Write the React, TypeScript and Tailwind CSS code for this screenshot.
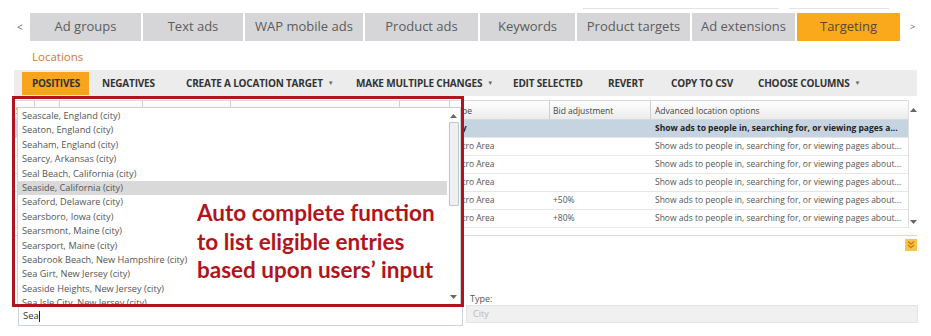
import React from "react";

const tabs = [
	{ label: "Ad groups", w: "w-[111px]" },
	{ label: "Text ads", w: "w-[100px]" },
	{ label: "WAP mobile ads", w: "w-[118px]" },
	{ label: "Product ads", w: "w-[113px]" },
	{ label: "Keywords", w: "w-[95px]" },
	{ label: "Product targets", w: "w-[113px]" },
	{ label: "Ad extensions", w: "w-[103px]" },
	{ label: "Targeting", w: "w-[103px]", active: true },
];

const tools = [
	{ label: "NEGATIVES", w: "w-[97px] pl-[13px]" },
	{ label: "CREATE A LOCATION TARGET", w: "w-[170px]", caret: true },
	{ label: "MAKE MULTIPLE CHANGES", w: "w-[157px]", caret: true },
	{ label: "EDIT SELECTED", w: "w-[95px]" },
	{ label: "REVERT", w: "w-[63px]" },
	{ label: "COPY TO CSV", w: "w-[87px]" },
	{ label: "CHOOSE COLUMNS", w: "w-[150px]", caret: true },
];

const suggestions = [
	"Seascale, England (city)",
	"Seaton, England (city)",
	"Seaham, England (city)",
	"Searcy, Arkansas (city)",
	"Seal Beach, California (city)",
	"Seaside, California (city)",
	"Seaford, Delaware (city)",
	"Searsboro, Iowa (city)",
	"Searsmont, Maine (city)",
	"Searsport, Maine (city)",
	"Seabrook Beach, New Hampshire (city)",
	"Sea Girt, New Jersey (city)",
	"Seaside Heights, New Jersey (city)",
	"Sea Isle City, New Jersey (city)",
];

const rows = [
	{ loc: "Seattle, Washington", type: "City", bid: "", bold: true },
	{ loc: "Seattle-Tacoma", type: "Metro Area", bid: "" },
	{ loc: "Portland", type: "Metro Area", bid: "" },
	{ loc: "Spokane", type: "Metro Area", bid: "" },
	{ loc: "Boise", type: "Metro Area", bid: "+50%" },
	{ loc: "Yakima", type: "Metro Area", bid: "+80%" },
];

const Up = () => (
	<svg width="7" height="4" viewBox="0 0 7 4">
		<path d="M0 4 L3.5 0 L7 4 Z" fill="#666" />
	</svg>
);

const Down = () => (
	<svg width="7" height="4" viewBox="0 0 7 4">
		<path d="M0 0 L3.5 4 L7 0 Z" fill="#666" />
	</svg>
);

export default function App() {
	return (
		<div className="relative w-[931px] h-[336px] overflow-hidden bg-white font-['Open_Sans',sans-serif] text-[#555]">
			{/* faint lines above tabs */}
			<div className="flex h-[13px] pt-[8px]">
				<div className="ml-[583px] h-px w-[196px] bg-[#e2e2e2]" />
				<div className="ml-[10px] h-px w-[100px] bg-[#e2e2e2]" />
			</div>

			{/* tabs */}
			<div className="flex h-[28px] items-stretch">
				<div className="w-[30px] pl-[17px] flex items-center text-[10px] text-[#666]">
					&lt;
				</div>
				<div className="flex gap-[2px]">
					{tabs.map((t) => (
						<div
							key={t.label}
							className={`${t.w} flex items-center justify-center text-[13px] ${
								t.active
									? "bg-[#f9a91b] text-[#5a4a2a]"
									: "bg-[#d6d6d8] text-[#5c5c5c]"
							}`}
						>
							{t.label}
						</div>
					))}
				</div>
				<div className="pl-[10px] flex items-center text-[9px] text-[#666]">
					&gt;
				</div>
			</div>

			{/* section title */}
			<div className="h-[29px] pl-[32px] pt-[8px] text-[11.5px] leading-[16px] text-[#d27a3a]">
				Locations
			</div>

			{/* toolbar */}
			<div className="mx-[14px] h-[26px] bg-[#ececec] flex items-start pl-[8px] pt-[2px] text-[10px] font-bold text-[#333] tracking-[-0.2px]">
				<div className="w-[67px] h-[23px] bg-[#f8a51d] flex items-center pl-[10px]">
					POSITIVES
				</div>
				{tools.map((t) => (
					<div key={t.label} className={`${t.w} h-[23px] flex items-center whitespace-nowrap`}>
						{t.label}
						{t.caret && <span className="ml-[5px] text-[6px] text-[#666]">▼</span>}
					</div>
				))}
			</div>

			{/* grid */}
			<div className="mx-[14px] mt-[4px] flex">
				<div className="flex-1">
					<div className="flex h-[20px] border-y border-[#d8d8d8] bg-gradient-to-b from-white to-[#ececec] text-[8.5px] text-[#444]">
						<div className="w-[21px] border-r border-[#cfcfcf] pl-[2px] leading-[19px]">S</div>
						<div className="w-[25px] border-r border-[#cfcfcf]" />
						<div className="w-[83px] border-r border-[#cfcfcf]" />
						<div className="w-[88px] border-r border-[#cfcfcf]" />
						<div className="w-[169px] border-r border-[#cfcfcf]" />
						<div className="w-[50px] border-r border-[#cfcfcf]" />
						<div className="w-[100px] border-r border-[#cfcfcf] pl-[3px] leading-[19px]">Type</div>
						<div className="w-[101px] border-r border-[#cfcfcf] pl-[3px] leading-[19px]">Bid adjustment</div>
						<div className="flex-1 pl-[4px] leading-[19px]">Advanced location options</div>
					</div>
					{rows.map((r, i) => (
						<div
							key={i}
							className={`flex h-[18px] items-center border-b border-[#e6e6e6] text-[8.5px] ${
								r.bold ? "bg-[#c6d4e2] font-bold text-[#222]" : "text-[#555]"
							}`}
						>
							<div className="w-[436px] pl-[30px] truncate">{r.loc}</div>
							<div className="w-[100px]">{r.type}</div>
							<div className="w-[101px] pl-[3px]">{r.bid}</div>
							<div className="flex-1 pl-[4px] truncate">
								{r.bold
									? "Show ads to people in, searching for, or viewing pages a..."
									: "Show ads to people in, searching for, or viewing pages about..."}
							</div>
						</div>
					))}
				</div>
				<div className="w-[9px] border-l border-[#e0e0e0] flex flex-col items-center justify-between pt-[8px] pb-[4px]">
					<Up />
					<Down />
				</div>
			</div>
			<div className="mx-[14px] h-[8px] border-b border-[#dcdcdc]" />

			{/* expand toggle */}
			<div className="flex justify-end pr-[14px] pt-[3px]">
				<svg width="12" height="12" viewBox="0 0 12 12">
					<rect width="12" height="12" fill="#f3c54a" />
					<path d="M3 2.5 L6 5 L9 2.5 M3 6 L6 8.5 L9 6" stroke="#d9760f" strokeWidth="1.4" fill="none" />
				</svg>
			</div>

			{/* edit panel */}
			<div className="mt-[41px] flex">
				<div className="ml-[18px] w-[445px] pt-[14px]">
					<div className="h-[20px] border border-[#c9d6e2] bg-white pl-[4px] text-[9.5px] leading-[18px] text-[#333]">
						Sea<span className="inline-block w-px h-[11px] bg-[#222] align-middle" />
					</div>
				</div>
				<div className="ml-[3px] w-[452px]">
					<div className="pl-[4px] h-[13px] text-[9px] leading-[13px] text-[#555]">Type:</div>
					<div className="h-[18px] bg-[#f0f0f0] border border-[#e4e4e4] pl-[6px] text-[9px] leading-[16px] text-[#b8b8b8]">
						City
					</div>
				</div>
			</div>

			{/* autocomplete dropdown */}
			<div className="absolute left-[17px] top-[107px] w-[444px] h-[199px] bg-white border border-[#d0d0d0] overflow-hidden flex">
				<div className="flex-1 pt-[1px]">
					{suggestions.map((s, i) => (
						<div
							key={s}
							className={`h-[14.4px] pl-[4px] text-[9.2px] leading-[14.4px] whitespace-nowrap ${
								i === 5 ? "bg-[#d9d9d9]" : ""
							}`}
						>
							{s}
						</div>
					))}
				</div>
				<div className="w-[13px] flex flex-col items-center pt-[6px] pb-[6px]">
					<Up />
					<div className="mt-[4px] w-[10px] h-[84px] border border-[#bcc5ce] bg-[#eef0f2] rounded-[1px]" />
					<div className="flex-1" />
					<Down />
				</div>
			</div>

			{/* annotation */}
			<div className="absolute left-[12px] top-[96px] w-[452px] h-[211px] border-[3px] border-[#b2141c] pointer-events-none" />
			<div className="absolute left-[197px] top-[199px] text-[22.5px] leading-[28.5px] font-bold text-[#b2141c] font-['Lato',sans-serif] pointer-events-none">
				<div>Auto complete function</div>
				<div>to list eligible entries</div>
				<div>based upon users’ input</div>
			</div>
		</div>
	);
}
